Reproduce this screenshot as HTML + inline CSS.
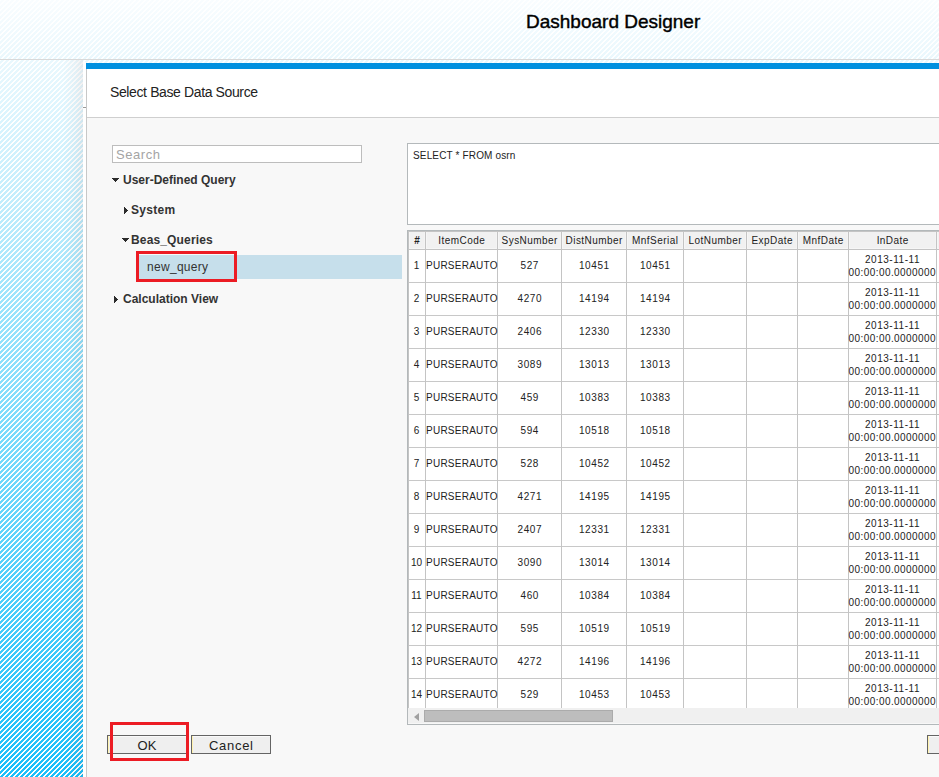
<!DOCTYPE html>
<html><head><meta charset="utf-8"><style>
*{margin:0;padding:0;box-sizing:border-box}
html,body{width:939px;height:777px;overflow:hidden;background:#fff}
body{position:relative;font-family:"Liberation Sans",sans-serif;color:#333}
.a{position:absolute}
.t{position:absolute;white-space:nowrap;line-height:1}
#bg{left:0;top:0;width:939px;height:777px;background:linear-gradient(to bottom,rgb(249,253,255) 0px,rgb(234,248,253) 58px,rgb(224,246,254) 100px,rgb(194,237,252) 200px,rgb(156,228,252) 300px,rgb(104,214,251) 500px,rgb(26,191,249) 777px)}
#stripes{left:0;top:0}
</style></head><body>
<div class="a" id="bg"></div>
<svg class="a" id="stripes" width="939" height="777" shape-rendering="crispEdges"><defs><pattern id="p" x="0" y="0" width="5" height="5" patternUnits="userSpaceOnUse"><g fill="#fff"><rect x="0" y="0" width="1" height="1"/><rect x="4" y="0" width="1" height="1"/><rect x="3" y="1" width="1" height="1"/><rect x="4" y="1" width="1" height="1"/><rect x="2" y="2" width="1" height="1"/><rect x="3" y="2" width="1" height="1"/><rect x="1" y="3" width="1" height="1"/><rect x="2" y="3" width="1" height="1"/><rect x="0" y="4" width="1" height="1"/><rect x="1" y="4" width="1" height="1"/></g></pattern></defs><rect width="939" height="777" fill="url(#p)"/></svg>
<div class="a" style="left:0;top:0;width:939px;height:59px;background:rgba(255,255,255,0.0)"></div>
<div class="a" style="left:0;top:59px;width:939px;height:1px;background:#d9d9d9"></div>
<div class="t" id="title" style="left:526px;top:12px;font-size:19px;color:#000;-webkit-text-stroke:0.4px #000">Dashboard Designer</div>
<div class="a" style="left:63px;top:60px;width:20px;height:717px;background:linear-gradient(to right,rgba(90,40,40,0),rgba(90,40,40,0.03) 60%,rgba(90,40,40,0.07))"></div>
<div class="a" style="left:83px;top:62px;width:3px;height:715px;background:#fff"></div>
<div class="a" style="left:83px;top:107px;width:3px;height:1px;background:#9a9a9a"></div>
<div class="a" style="left:86px;top:63px;width:853px;height:6px;background:#0090df"></div>
<div class="a" style="left:86px;top:69px;width:1px;height:708px;background:#c8c8c8"></div>
<div class="a" style="left:87px;top:69px;width:852px;height:48px;background:#fff"></div>
<div class="a" style="left:87px;top:117px;width:852px;height:1px;background:#cfcfcf"></div>
<div class="a" style="left:87px;top:118px;width:852px;height:659px;background:#f8f8f8"></div>
<div class="t" id="dtitle" style="left:110px;top:85px;font-size:14px;color:#222;letter-spacing:-0.38px">Select Base Data Source</div>
<div class="a" style="left:112px;top:145px;width:250px;height:18px;border:1px solid #bdbdbd;background:#fff"></div>
<div class="t" id="search" style="left:116px;top:148px;font-size:13px;color:#a4a4a4;letter-spacing:0.55px">Search</div>
<svg class="a" style="left:112px;top:178px" width="7" height="4" shape-rendering="crispEdges"><g fill="#2b2b2b"><rect x="0" y="0" width="7" height="1"/><rect x="1" y="1" width="5" height="1"/><rect x="2" y="2" width="3" height="1"/><rect x="3" y="3" width="1" height="1"/></g></svg>
<div class="t" id="udq" style="left:123px;top:174px;font-size:12px;font-weight:bold;color:#333">User-Defined Query</div>
<svg class="a" style="left:124px;top:207px" width="4" height="7" shape-rendering="crispEdges"><g fill="#2b2b2b"><rect x="0" y="0" width="1" height="7"/><rect x="1" y="1" width="1" height="5"/><rect x="2" y="2" width="1" height="3"/><rect x="3" y="3" width="1" height="1"/></g></svg>
<div class="t" style="left:131px;top:204px;font-size:12px;font-weight:bold;color:#333;letter-spacing:0.3px">System</div>
<svg class="a" style="left:122px;top:238px" width="7" height="4" shape-rendering="crispEdges"><g fill="#2b2b2b"><rect x="0" y="0" width="7" height="1"/><rect x="1" y="1" width="5" height="1"/><rect x="2" y="2" width="3" height="1"/><rect x="3" y="3" width="1" height="1"/></g></svg>
<div class="t" style="left:131px;top:234px;font-size:12px;font-weight:bold;color:#333;letter-spacing:0.15px">Beas_Queries</div>
<div class="a" style="left:137px;top:255px;width:265px;height:24px;background:#c6dfeb"></div>
<div class="t" id="nq" style="left:147px;top:261px;font-size:12px;color:#333;letter-spacing:0.3px">new_query</div>
<svg class="a" style="left:114px;top:296px" width="4" height="7" shape-rendering="crispEdges"><g fill="#2b2b2b"><rect x="0" y="0" width="1" height="7"/><rect x="1" y="1" width="1" height="5"/><rect x="2" y="2" width="1" height="3"/><rect x="3" y="3" width="1" height="1"/></g></svg>
<div class="t" style="left:123px;top:293px;font-size:12px;font-weight:bold;color:#333">Calculation View</div>
<div class="a" style="left:407px;top:143px;width:540px;height:82px;border:1px solid #b4b9bb;background:#fff"></div>
<div class="t" id="sql" style="left:413px;top:151px;font-size:10px;color:#222;letter-spacing:0.15px">SELECT * FROM osrn</div>
<div class="a" style="left:407px;top:230px;width:540px;height:495px;border:1px solid #b3b8ba;border-right:none;background:#fff;overflow:hidden">
<div class="a" style="left:0;top:0;width:540px;height:18px;background:#f1f1f1"></div>
<div class="a" style="left:0;top:0;width:540px;height:1px;background:#c4c4c4"></div>
<div class="a" style="left:0;top:17px;width:540px;height:1px;background:#f6f6f6"></div>
<div class="a" style="left:1px;top:1px;width:1px;height:16px;background:#f6f6f6"></div>
<div class="a" style="left:18px;top:1px;width:1px;height:16px;background:#f6f6f6"></div>
<div class="a" style="left:90px;top:1px;width:1px;height:16px;background:#f6f6f6"></div>
<div class="a" style="left:154px;top:1px;width:1px;height:16px;background:#f6f6f6"></div>
<div class="a" style="left:219px;top:1px;width:1px;height:16px;background:#f6f6f6"></div>
<div class="a" style="left:276px;top:1px;width:1px;height:16px;background:#f6f6f6"></div>
<div class="a" style="left:339px;top:1px;width:1px;height:16px;background:#f6f6f6"></div>
<div class="a" style="left:390px;top:1px;width:1px;height:16px;background:#f6f6f6"></div>
<div class="a" style="left:441px;top:1px;width:1px;height:16px;background:#f6f6f6"></div>
<div class="a" style="left:529px;top:1px;width:1px;height:16px;background:#f6f6f6"></div>
<div class="a" style="left:16px;top:1px;width:1px;height:16px;background:#f4f4f4"></div>
<div class="a" style="left:88px;top:1px;width:1px;height:16px;background:#f4f4f4"></div>
<div class="a" style="left:152px;top:1px;width:1px;height:16px;background:#f4f4f4"></div>
<div class="a" style="left:217px;top:1px;width:1px;height:16px;background:#f4f4f4"></div>
<div class="a" style="left:274px;top:1px;width:1px;height:16px;background:#f4f4f4"></div>
<div class="a" style="left:337px;top:1px;width:1px;height:16px;background:#f4f4f4"></div>
<div class="a" style="left:388px;top:1px;width:1px;height:16px;background:#f4f4f4"></div>
<div class="a" style="left:439px;top:1px;width:1px;height:16px;background:#f4f4f4"></div>
<div class="a" style="left:527px;top:1px;width:1px;height:16px;background:#f4f4f4"></div>
<div class="a" style="left:0;top:18px;width:540px;height:1px;background:#c4c4c4"></div>
<div class="a" style="left:0;top:51px;width:540px;height:1px;background:#c8c8c8"></div>
<div class="a" style="left:0;top:84px;width:540px;height:1px;background:#c8c8c8"></div>
<div class="a" style="left:0;top:117px;width:540px;height:1px;background:#c8c8c8"></div>
<div class="a" style="left:0;top:150px;width:540px;height:1px;background:#c8c8c8"></div>
<div class="a" style="left:0;top:183px;width:540px;height:1px;background:#c8c8c8"></div>
<div class="a" style="left:0;top:216px;width:540px;height:1px;background:#c8c8c8"></div>
<div class="a" style="left:0;top:249px;width:540px;height:1px;background:#c8c8c8"></div>
<div class="a" style="left:0;top:282px;width:540px;height:1px;background:#c8c8c8"></div>
<div class="a" style="left:0;top:315px;width:540px;height:1px;background:#c8c8c8"></div>
<div class="a" style="left:0;top:348px;width:540px;height:1px;background:#c8c8c8"></div>
<div class="a" style="left:0;top:381px;width:540px;height:1px;background:#c8c8c8"></div>
<div class="a" style="left:0;top:414px;width:540px;height:1px;background:#c8c8c8"></div>
<div class="a" style="left:0;top:447px;width:540px;height:1px;background:#c8c8c8"></div>
<div class="a" style="left:0;top:0;width:1px;height:477px;background:#c4c4c4"></div>
<div class="a" style="left:17px;top:0;width:1px;height:477px;background:#c4c4c4"></div>
<div class="a" style="left:89px;top:0;width:1px;height:477px;background:#c4c4c4"></div>
<div class="a" style="left:153px;top:0;width:1px;height:477px;background:#c4c4c4"></div>
<div class="a" style="left:218px;top:0;width:1px;height:477px;background:#c4c4c4"></div>
<div class="a" style="left:275px;top:0;width:1px;height:477px;background:#c4c4c4"></div>
<div class="a" style="left:338px;top:0;width:1px;height:477px;background:#c4c4c4"></div>
<div class="a" style="left:389px;top:0;width:1px;height:477px;background:#c4c4c4"></div>
<div class="a" style="left:440px;top:0;width:1px;height:477px;background:#c4c4c4"></div>
<div class="a" style="left:528px;top:0;width:1px;height:477px;background:#c4c4c4"></div>
<div class="t" style="left:1px;top:5px;width:16px;text-align:center;font-size:10px;color:#222;letter-spacing:0.45px;text-indent:0.45px;font-weight:bold;">#</div>
<div class="t" style="left:18px;top:5px;width:71px;text-align:center;font-size:10px;color:#222;letter-spacing:0.45px;text-indent:0.45px;">ItemCode</div>
<div class="t" style="left:90px;top:5px;width:63px;text-align:center;font-size:10px;color:#222;letter-spacing:0.45px;text-indent:0.45px;">SysNumber</div>
<div class="t" style="left:154px;top:5px;width:64px;text-align:center;font-size:10px;color:#222;letter-spacing:0.45px;text-indent:0.45px;">DistNumber</div>
<div class="t" style="left:219px;top:5px;width:56px;text-align:center;font-size:10px;color:#222;letter-spacing:0.45px;text-indent:0.45px;">MnfSerial</div>
<div class="t" style="left:276px;top:5px;width:62px;text-align:center;font-size:10px;color:#222;letter-spacing:0.45px;text-indent:0.45px;">LotNumber</div>
<div class="t" style="left:339px;top:5px;width:50px;text-align:center;font-size:10px;color:#222;letter-spacing:0.45px;text-indent:0.45px;">ExpDate</div>
<div class="t" style="left:390px;top:5px;width:50px;text-align:center;font-size:10px;color:#222;letter-spacing:0.45px;text-indent:0.45px;">MnfDate</div>
<div class="t" style="left:441px;top:5px;width:87px;text-align:center;font-size:10px;color:#222;letter-spacing:0.45px;text-indent:0.45px;">InDate</div>
<div class="t" style="left:-1px;top:30px;width:19px;text-align:center;font-size:10px;color:#222;">1</div>
<div class="t" style="left:18px;top:30px;font-size:10px;color:#222;letter-spacing:0.25px">PURSERAUTO</div>
<div class="t" style="left:90px;top:30px;width:63px;text-align:center;font-size:10px;color:#222;letter-spacing:0.6px;text-indent:0.6px;">527</div>
<div class="t" style="left:154px;top:30px;width:64px;text-align:center;font-size:10px;color:#222;letter-spacing:0.6px;text-indent:0.6px;">10451</div>
<div class="t" style="left:219px;top:30px;width:56px;text-align:center;font-size:10px;color:#222;letter-spacing:0.6px;text-indent:0.6px;">10451</div>
<div class="t" style="left:441px;top:24px;width:87px;text-align:center;font-size:10px;color:#222;letter-spacing:0.55px;">2013-11-11</div>
<div class="t" style="left:440.6px;top:37px;font-size:10px;color:#222;letter-spacing:0.42px">00:00:00.0000000</div>
<div class="t" style="left:-1px;top:63px;width:19px;text-align:center;font-size:10px;color:#222;">2</div>
<div class="t" style="left:18px;top:63px;font-size:10px;color:#222;letter-spacing:0.25px">PURSERAUTO</div>
<div class="t" style="left:90px;top:63px;width:63px;text-align:center;font-size:10px;color:#222;letter-spacing:0.6px;text-indent:0.6px;">4270</div>
<div class="t" style="left:154px;top:63px;width:64px;text-align:center;font-size:10px;color:#222;letter-spacing:0.6px;text-indent:0.6px;">14194</div>
<div class="t" style="left:219px;top:63px;width:56px;text-align:center;font-size:10px;color:#222;letter-spacing:0.6px;text-indent:0.6px;">14194</div>
<div class="t" style="left:441px;top:57px;width:87px;text-align:center;font-size:10px;color:#222;letter-spacing:0.55px;">2013-11-11</div>
<div class="t" style="left:440.6px;top:70px;font-size:10px;color:#222;letter-spacing:0.42px">00:00:00.0000000</div>
<div class="t" style="left:-1px;top:96px;width:19px;text-align:center;font-size:10px;color:#222;">3</div>
<div class="t" style="left:18px;top:96px;font-size:10px;color:#222;letter-spacing:0.25px">PURSERAUTO</div>
<div class="t" style="left:90px;top:96px;width:63px;text-align:center;font-size:10px;color:#222;letter-spacing:0.6px;text-indent:0.6px;">2406</div>
<div class="t" style="left:154px;top:96px;width:64px;text-align:center;font-size:10px;color:#222;letter-spacing:0.6px;text-indent:0.6px;">12330</div>
<div class="t" style="left:219px;top:96px;width:56px;text-align:center;font-size:10px;color:#222;letter-spacing:0.6px;text-indent:0.6px;">12330</div>
<div class="t" style="left:441px;top:90px;width:87px;text-align:center;font-size:10px;color:#222;letter-spacing:0.55px;">2013-11-11</div>
<div class="t" style="left:440.6px;top:103px;font-size:10px;color:#222;letter-spacing:0.42px">00:00:00.0000000</div>
<div class="t" style="left:-1px;top:129px;width:19px;text-align:center;font-size:10px;color:#222;">4</div>
<div class="t" style="left:18px;top:129px;font-size:10px;color:#222;letter-spacing:0.25px">PURSERAUTO</div>
<div class="t" style="left:90px;top:129px;width:63px;text-align:center;font-size:10px;color:#222;letter-spacing:0.6px;text-indent:0.6px;">3089</div>
<div class="t" style="left:154px;top:129px;width:64px;text-align:center;font-size:10px;color:#222;letter-spacing:0.6px;text-indent:0.6px;">13013</div>
<div class="t" style="left:219px;top:129px;width:56px;text-align:center;font-size:10px;color:#222;letter-spacing:0.6px;text-indent:0.6px;">13013</div>
<div class="t" style="left:441px;top:123px;width:87px;text-align:center;font-size:10px;color:#222;letter-spacing:0.55px;">2013-11-11</div>
<div class="t" style="left:440.6px;top:136px;font-size:10px;color:#222;letter-spacing:0.42px">00:00:00.0000000</div>
<div class="t" style="left:-1px;top:162px;width:19px;text-align:center;font-size:10px;color:#222;">5</div>
<div class="t" style="left:18px;top:162px;font-size:10px;color:#222;letter-spacing:0.25px">PURSERAUTO</div>
<div class="t" style="left:90px;top:162px;width:63px;text-align:center;font-size:10px;color:#222;letter-spacing:0.6px;text-indent:0.6px;">459</div>
<div class="t" style="left:154px;top:162px;width:64px;text-align:center;font-size:10px;color:#222;letter-spacing:0.6px;text-indent:0.6px;">10383</div>
<div class="t" style="left:219px;top:162px;width:56px;text-align:center;font-size:10px;color:#222;letter-spacing:0.6px;text-indent:0.6px;">10383</div>
<div class="t" style="left:441px;top:156px;width:87px;text-align:center;font-size:10px;color:#222;letter-spacing:0.55px;">2013-11-11</div>
<div class="t" style="left:440.6px;top:169px;font-size:10px;color:#222;letter-spacing:0.42px">00:00:00.0000000</div>
<div class="t" style="left:-1px;top:195px;width:19px;text-align:center;font-size:10px;color:#222;">6</div>
<div class="t" style="left:18px;top:195px;font-size:10px;color:#222;letter-spacing:0.25px">PURSERAUTO</div>
<div class="t" style="left:90px;top:195px;width:63px;text-align:center;font-size:10px;color:#222;letter-spacing:0.6px;text-indent:0.6px;">594</div>
<div class="t" style="left:154px;top:195px;width:64px;text-align:center;font-size:10px;color:#222;letter-spacing:0.6px;text-indent:0.6px;">10518</div>
<div class="t" style="left:219px;top:195px;width:56px;text-align:center;font-size:10px;color:#222;letter-spacing:0.6px;text-indent:0.6px;">10518</div>
<div class="t" style="left:441px;top:189px;width:87px;text-align:center;font-size:10px;color:#222;letter-spacing:0.55px;">2013-11-11</div>
<div class="t" style="left:440.6px;top:202px;font-size:10px;color:#222;letter-spacing:0.42px">00:00:00.0000000</div>
<div class="t" style="left:-1px;top:228px;width:19px;text-align:center;font-size:10px;color:#222;">7</div>
<div class="t" style="left:18px;top:228px;font-size:10px;color:#222;letter-spacing:0.25px">PURSERAUTO</div>
<div class="t" style="left:90px;top:228px;width:63px;text-align:center;font-size:10px;color:#222;letter-spacing:0.6px;text-indent:0.6px;">528</div>
<div class="t" style="left:154px;top:228px;width:64px;text-align:center;font-size:10px;color:#222;letter-spacing:0.6px;text-indent:0.6px;">10452</div>
<div class="t" style="left:219px;top:228px;width:56px;text-align:center;font-size:10px;color:#222;letter-spacing:0.6px;text-indent:0.6px;">10452</div>
<div class="t" style="left:441px;top:222px;width:87px;text-align:center;font-size:10px;color:#222;letter-spacing:0.55px;">2013-11-11</div>
<div class="t" style="left:440.6px;top:235px;font-size:10px;color:#222;letter-spacing:0.42px">00:00:00.0000000</div>
<div class="t" style="left:-1px;top:261px;width:19px;text-align:center;font-size:10px;color:#222;">8</div>
<div class="t" style="left:18px;top:261px;font-size:10px;color:#222;letter-spacing:0.25px">PURSERAUTO</div>
<div class="t" style="left:90px;top:261px;width:63px;text-align:center;font-size:10px;color:#222;letter-spacing:0.6px;text-indent:0.6px;">4271</div>
<div class="t" style="left:154px;top:261px;width:64px;text-align:center;font-size:10px;color:#222;letter-spacing:0.6px;text-indent:0.6px;">14195</div>
<div class="t" style="left:219px;top:261px;width:56px;text-align:center;font-size:10px;color:#222;letter-spacing:0.6px;text-indent:0.6px;">14195</div>
<div class="t" style="left:441px;top:255px;width:87px;text-align:center;font-size:10px;color:#222;letter-spacing:0.55px;">2013-11-11</div>
<div class="t" style="left:440.6px;top:268px;font-size:10px;color:#222;letter-spacing:0.42px">00:00:00.0000000</div>
<div class="t" style="left:-1px;top:294px;width:19px;text-align:center;font-size:10px;color:#222;">9</div>
<div class="t" style="left:18px;top:294px;font-size:10px;color:#222;letter-spacing:0.25px">PURSERAUTO</div>
<div class="t" style="left:90px;top:294px;width:63px;text-align:center;font-size:10px;color:#222;letter-spacing:0.6px;text-indent:0.6px;">2407</div>
<div class="t" style="left:154px;top:294px;width:64px;text-align:center;font-size:10px;color:#222;letter-spacing:0.6px;text-indent:0.6px;">12331</div>
<div class="t" style="left:219px;top:294px;width:56px;text-align:center;font-size:10px;color:#222;letter-spacing:0.6px;text-indent:0.6px;">12331</div>
<div class="t" style="left:441px;top:288px;width:87px;text-align:center;font-size:10px;color:#222;letter-spacing:0.55px;">2013-11-11</div>
<div class="t" style="left:440.6px;top:301px;font-size:10px;color:#222;letter-spacing:0.42px">00:00:00.0000000</div>
<div class="t" style="left:-1px;top:327px;width:19px;text-align:center;font-size:10px;color:#222;">10</div>
<div class="t" style="left:18px;top:327px;font-size:10px;color:#222;letter-spacing:0.25px">PURSERAUTO</div>
<div class="t" style="left:90px;top:327px;width:63px;text-align:center;font-size:10px;color:#222;letter-spacing:0.6px;text-indent:0.6px;">3090</div>
<div class="t" style="left:154px;top:327px;width:64px;text-align:center;font-size:10px;color:#222;letter-spacing:0.6px;text-indent:0.6px;">13014</div>
<div class="t" style="left:219px;top:327px;width:56px;text-align:center;font-size:10px;color:#222;letter-spacing:0.6px;text-indent:0.6px;">13014</div>
<div class="t" style="left:441px;top:321px;width:87px;text-align:center;font-size:10px;color:#222;letter-spacing:0.55px;">2013-11-11</div>
<div class="t" style="left:440.6px;top:334px;font-size:10px;color:#222;letter-spacing:0.42px">00:00:00.0000000</div>
<div class="t" style="left:-1px;top:360px;width:19px;text-align:center;font-size:10px;color:#222;">11</div>
<div class="t" style="left:18px;top:360px;font-size:10px;color:#222;letter-spacing:0.25px">PURSERAUTO</div>
<div class="t" style="left:90px;top:360px;width:63px;text-align:center;font-size:10px;color:#222;letter-spacing:0.6px;text-indent:0.6px;">460</div>
<div class="t" style="left:154px;top:360px;width:64px;text-align:center;font-size:10px;color:#222;letter-spacing:0.6px;text-indent:0.6px;">10384</div>
<div class="t" style="left:219px;top:360px;width:56px;text-align:center;font-size:10px;color:#222;letter-spacing:0.6px;text-indent:0.6px;">10384</div>
<div class="t" style="left:441px;top:354px;width:87px;text-align:center;font-size:10px;color:#222;letter-spacing:0.55px;">2013-11-11</div>
<div class="t" style="left:440.6px;top:367px;font-size:10px;color:#222;letter-spacing:0.42px">00:00:00.0000000</div>
<div class="t" style="left:-1px;top:393px;width:19px;text-align:center;font-size:10px;color:#222;">12</div>
<div class="t" style="left:18px;top:393px;font-size:10px;color:#222;letter-spacing:0.25px">PURSERAUTO</div>
<div class="t" style="left:90px;top:393px;width:63px;text-align:center;font-size:10px;color:#222;letter-spacing:0.6px;text-indent:0.6px;">595</div>
<div class="t" style="left:154px;top:393px;width:64px;text-align:center;font-size:10px;color:#222;letter-spacing:0.6px;text-indent:0.6px;">10519</div>
<div class="t" style="left:219px;top:393px;width:56px;text-align:center;font-size:10px;color:#222;letter-spacing:0.6px;text-indent:0.6px;">10519</div>
<div class="t" style="left:441px;top:387px;width:87px;text-align:center;font-size:10px;color:#222;letter-spacing:0.55px;">2013-11-11</div>
<div class="t" style="left:440.6px;top:400px;font-size:10px;color:#222;letter-spacing:0.42px">00:00:00.0000000</div>
<div class="t" style="left:-1px;top:426px;width:19px;text-align:center;font-size:10px;color:#222;">13</div>
<div class="t" style="left:18px;top:426px;font-size:10px;color:#222;letter-spacing:0.25px">PURSERAUTO</div>
<div class="t" style="left:90px;top:426px;width:63px;text-align:center;font-size:10px;color:#222;letter-spacing:0.6px;text-indent:0.6px;">4272</div>
<div class="t" style="left:154px;top:426px;width:64px;text-align:center;font-size:10px;color:#222;letter-spacing:0.6px;text-indent:0.6px;">14196</div>
<div class="t" style="left:219px;top:426px;width:56px;text-align:center;font-size:10px;color:#222;letter-spacing:0.6px;text-indent:0.6px;">14196</div>
<div class="t" style="left:441px;top:420px;width:87px;text-align:center;font-size:10px;color:#222;letter-spacing:0.55px;">2013-11-11</div>
<div class="t" style="left:440.6px;top:433px;font-size:10px;color:#222;letter-spacing:0.42px">00:00:00.0000000</div>
<div class="t" style="left:-1px;top:459px;width:19px;text-align:center;font-size:10px;color:#222;">14</div>
<div class="t" style="left:18px;top:459px;font-size:10px;color:#222;letter-spacing:0.25px">PURSERAUTO</div>
<div class="t" style="left:90px;top:459px;width:63px;text-align:center;font-size:10px;color:#222;letter-spacing:0.6px;text-indent:0.6px;">529</div>
<div class="t" style="left:154px;top:459px;width:64px;text-align:center;font-size:10px;color:#222;letter-spacing:0.6px;text-indent:0.6px;">10453</div>
<div class="t" style="left:219px;top:459px;width:56px;text-align:center;font-size:10px;color:#222;letter-spacing:0.6px;text-indent:0.6px;">10453</div>
<div class="t" style="left:441px;top:453px;width:87px;text-align:center;font-size:10px;color:#222;letter-spacing:0.55px;">2013-11-11</div>
<div class="t" style="left:440.6px;top:466px;font-size:10px;color:#222;letter-spacing:0.42px">00:00:00.0000000</div>
<div class="a" style="left:0;top:477px;width:540px;height:16px;background:#f0f0f0;border-bottom:1px solid #f7f7f7"></div>
<svg class="a" style="left:6px;top:482px" width="5" height="8"><path d="M5 0 L0 4 L5 8 Z" fill="#a0a0a0"/></svg>
<div class="a" style="left:16px;top:479px;width:189px;height:12px;background:#bdbdbd;border:1px solid #ababab"></div>
</div>
<div class="a" style="left:107px;top:735px;width:80px;height:19px;border:1px solid #646464;background:#efefef"><div class="a" style="left:0;top:0;width:1px;height:17px;background:#fff3b0"></div><div class="a" style="left:1px;top:0;width:77px;height:1px;background:#fafafa"></div></div><div class="t" id="ok" style="left:107px;top:739px;width:80px;text-align:center;font-size:13px;color:#222;letter-spacing:0.3px;text-indent:0.3px">OK</div>
<div class="a" style="left:191px;top:735px;width:80px;height:19px;border:1px solid #646464;background:#efefef"><div class="a" style="left:0;top:0;width:1px;height:17px;background:#fff3b0"></div><div class="a" style="left:1px;top:0;width:77px;height:1px;background:#fafafa"></div></div><div class="t" id="cancel" style="left:191px;top:739px;width:80px;text-align:center;font-size:13px;color:#222;letter-spacing:0.7px;text-indent:0.7px">Cancel</div>
<div class="a" style="left:927px;top:735px;width:80px;height:19px;border:1px solid #646464;background:#efefef"><div class="a" style="left:0;top:0;width:1px;height:17px;background:#fff3b0"></div><div class="a" style="left:1px;top:0;width:77px;height:1px;background:#fafafa"></div></div><div class="t" id="r" style="left:927px;top:739px;width:80px;text-align:center;font-size:13px;color:#222;letter-spacing:0.3px;text-indent:0.3px"></div>
<div class="a" style="left:136px;top:251px;width:101px;height:31px;border:3px solid #ec1c24"></div>
<div class="a" style="left:110px;top:722px;width:79px;height:39px;border:3px solid #ec1c24"></div>
</body></html>
